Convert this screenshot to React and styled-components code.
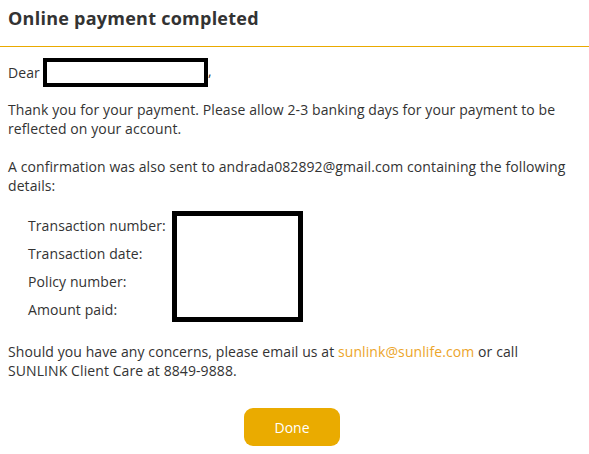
import React from "react";
import styled, { createGlobalStyle } from "styled-components";

const Global = createGlobalStyle`
  html, body { margin: 0; padding: 0; background: #ffffff; }
  body {
    font-family: "Open Sans", "Noto Sans", "Liberation Sans", sans-serif;
    color: #333333;
    font-size: 14px;
    line-height: 19px;
    letter-spacing: 0.09px;
  }
`;

const Page = styled.div`
  width: 589px;
  display: flex;
  flex-direction: column;
`;

const Header = styled.header`
  padding: 6px 8px 16px;
  border-bottom: 1px solid #eaaa00;
`;

const Title = styled.h1`
  margin: 0;
  font-size: 18px;
  line-height: 24px;
  font-weight: 700;
  letter-spacing: 0.25px;
  color: #333333;
`;

const Body = styled.main`
  padding: 0 8px;
  display: flex;
  flex-direction: column;
`;

const Para = styled.p`
  margin: ${(p) => p.$top}px 0 0;
  font-size: 14px;
  line-height: 19px;
`;

const Redacted = styled.span`
  display: inline-block;
  box-sizing: border-box;
  width: ${(p) => p.$w}px;
  height: ${(p) => p.$h}px;
  border: ${(p) => p.$b}px solid #000000;
  background: #ffffff;
  vertical-align: middle;
`;

const GreetingLine = styled.p`
  margin: 11px 0 0;
  display: flex;
  align-items: center;
  gap: 3px;
`;

const DetailsGrid = styled.div`
  margin: 16px 0 0 20px;
  display: grid;
  grid-template-columns: 144px auto;
  grid-auto-rows: 28px;
  align-items: center;
`;

const Label = styled.span`
  grid-column: 1;
  font-size: 14px;
`;

const ValueBox = styled(Redacted)`
  grid-column: 2;
  grid-row: 1 / span 4;
  align-self: start;
`;

const Link = styled.a`
  color: #eca52a;
  text-decoration: none;
`;

const Actions = styled.div`
  margin-top: 28px;
  display: flex;
  justify-content: center;
  padding-right: 5px;
`;

const DoneButton = styled.button`
  width: 96px;
  height: 38px;
  border: none;
  border-radius: 9px;
  background: #eaab00;
  color: #ffffff;
  font-family: "Open Sans", "Noto Sans", sans-serif;
  font-size: 14px;
  cursor: pointer;
`;

export default function App() {
  return (
    <Page>
      <Global />
      <Header>
        <Title>Online payment completed</Title>
      </Header>
      <Body>
        <GreetingLine>
          <span>Dear</span>
          <span>
            <Redacted $w={165} $h={29} $b={4} />,
          </span>
        </GreetingLine>
        <Para $top={13}>
          Thank you for your payment. Please allow 2-3 banking days for your payment to be
          reflected on your account.
        </Para>
        <Para $top={19}>
          A confirmation was also sent to andrada082892@gmail.com containing the following
          details:
        </Para>
        <DetailsGrid>
          <Label>Transaction number:</Label>
          <ValueBox $w={131} $h={111} $b={5} />
          <Label>Transaction date:</Label>
          <Label>Policy number:</Label>
          <Label>Amount paid:</Label>
        </DetailsGrid>
        <Para $top={19}>
          Should you have any concerns, please email us at{" "}
          <Link href="#">sunlink@sunlife.com</Link> or call SUNLINK Client Care at 8849-9888.
        </Para>
        <Actions>
          <DoneButton>Done</DoneButton>
        </Actions>
      </Body>
    </Page>
  );
}
